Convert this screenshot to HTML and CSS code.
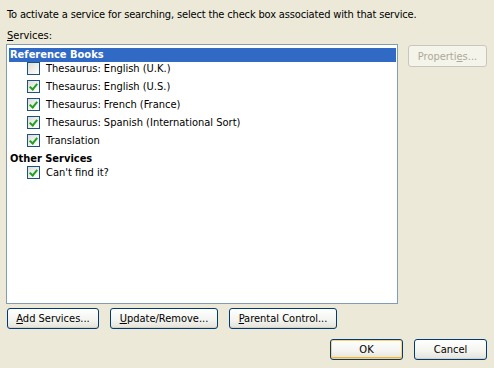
FILE: index.html
```html
<!DOCTYPE html>
<html lang="en">
<head>
    <meta charset="UTF-8">
    <title>Research Options</title>
    <link rel="stylesheet" href="styles.css">
</head>
<body>
    <div class="dialog">
        <p class="intro">To activate a service for searching, select the check box associated with that service.</p>
        <p class="label"><u>S</u>ervices:</p>

        <div class="services">
            <div class="list">
                <div class="group selected">Reference Books</div>
                <div class="item"><span class="box"></span>Thesaurus: English (U.K.)</div>
                <div class="item"><span class="box checked"></span>Thesaurus: English (U.S.)</div>
                <div class="item"><span class="box checked"></span>Thesaurus: French (France)</div>
                <div class="item"><span class="box checked"></span>Thesaurus: Spanish (International Sort)</div>
                <div class="item"><span class="box checked"></span>Translation</div>
                <div class="group second">Other Services</div>
                <div class="item"><span class="box checked"></span>Can't find it?</div>
            </div>
            <div class="side">
                <button class="btn disabled" disabled>Properti<u>e</u>s...</button>
            </div>
        </div>

        <div class="actions">
            <button class="btn add"><u>A</u>dd Services...</button>
            <button class="btn wide"><u>U</u>pdate/Remove...</button>
            <button class="btn wide"><u>P</u>arental Control...</button>
        </div>

        <div class="footer">
            <button class="btn small default">OK</button>
            <button class="btn small">Cancel</button>
        </div>
    </div>
</body>
</html>
```

FILE: styles.css
```css
body {
    margin: 0;
    background: #ece9d8;
    font-family: "DejaVu Sans Condensed", "DejaVu Sans", sans-serif;
    font-size: 11px;
    color: #000;
}
.dialog {
    width: 481px;
    padding: 8px 0 0 6px;
}
.intro {
    margin: 0 0 0 1px;
    line-height: 13px;
    white-space: nowrap;
    letter-spacing: -0.15px;
}
.label {
    margin: 8px 0 2px 1px;
    line-height: 13px;
}
.services {
    display: flex;
    gap: 10px;
}
.list {
    width: 387px;
    height: 255px;
    background: white;
    border: 1px solid #7f9db9;
    padding: 3px 1px 0 2px;
}
.group {
    height: 14px;
    line-height: 14px;
    font-weight: bold;
    padding-left: 1px;
}
.group.selected {
    background: #316ac5;
    color: white;
}
.group.second {
    margin-top: 2px;
}
.item {
    display: flex;
    align-items: center;
    height: 13px;
    margin-bottom: 5px;
    padding-left: 18px;
    gap: 6px;
    white-space: nowrap;
}
.box {
    width: 11px;
    height: 11px;
    border: 1px solid #1c5180;
    background: linear-gradient(135deg, #dcdcd7, #ffffff);
    position: relative;
    flex: none;
}
.box.checked::after {
    content: "";
    position: absolute;
    left: 3px;
    top: 1px;
    width: 3px;
    height: 6px;
    border: solid #21a121;
    border-width: 0 2px 2px 0;
    transform: rotate(40deg);
}
.side {
    padding-top: 1px;
}
.btn {
    font-family: inherit;
    font-size: 11px;
    color: #000;
    height: 21px;
    padding: 0;
    border: 1px solid #003c74;
    border-radius: 3px;
    background: linear-gradient(#ffffff, #f3f3ef 60%, #e3e2da);
    box-shadow: inset 0 -1px 0 #d6d0c5;
}
.btn.disabled {
    width: 79px;
    height: 22px;
    color: #aca899;
    border-color: #c9c7ba;
    background: #f5f4ea;
    box-shadow: none;
}
.actions {
    display: flex;
    gap: 11px;
    margin: 4px 0 0 1px;
}
.add {
    width: 92px;
}
.wide {
    width: 108px;
}
.footer {
    display: flex;
    justify-content: flex-end;
    gap: 11px;
    margin-top: 10px;
}
.small {
    width: 73px;
}
.default {
    box-shadow: inset 0 0 0 1px #fcd17a, inset 0 -2px 0 #f8b330;
}
```
